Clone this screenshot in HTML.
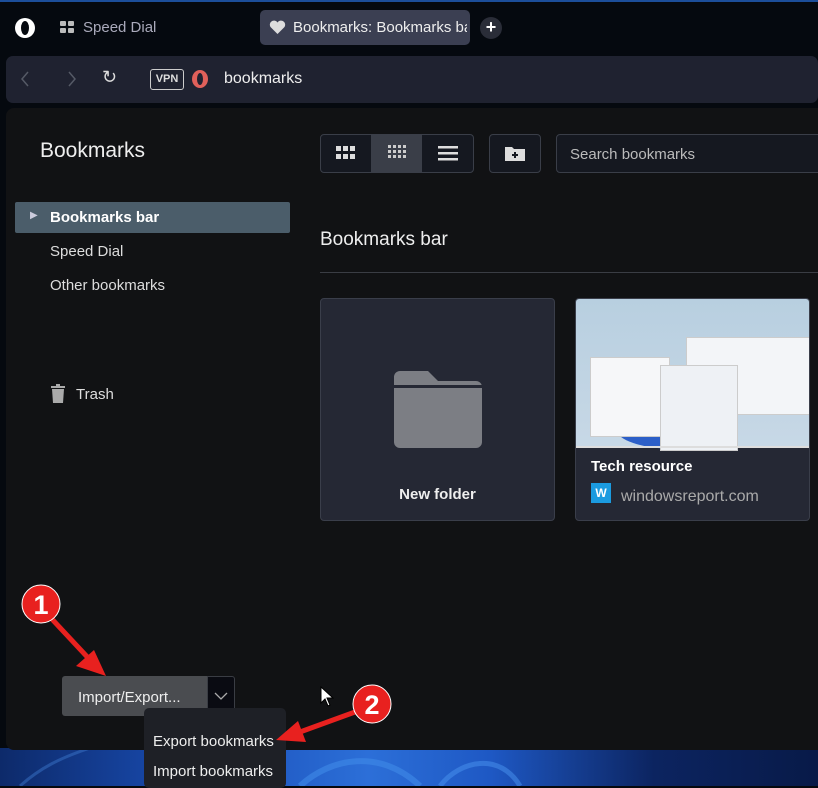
<!DOCTYPE html>
<html><head><meta charset="utf-8"><style>
*{margin:0;padding:0;box-sizing:border-box}
body{width:818px;height:786px;overflow:hidden;background:#05090f;font-family:"Liberation Sans",sans-serif;position:relative;color:#e6e6e6}
.a{position:absolute}
.wall{left:0;top:748px;width:818px;height:38px;background:linear-gradient(90deg,#0d2a6a,#1a4fb8 25%,#2c6fd8 45%,#1e58c4 60%,#0c2460 80%,#081a48)}
.top{left:0;top:0;width:818px;height:110px;background:#05090f;border-top:2px solid #1c4e9a}
.main{left:6px;top:108px;width:812px;height:642px;background:#111214;border-radius:8px 0 0 8px}
.btn{border:1px solid #3a3e48;background:#151820;border-radius:4px}
.card{background:#252834;border:1px solid #3a3e4a;border-radius:4px}
</style></head><body>
<div class="a top"></div>
<div class="a wall"></div>
<svg class="a" style="left:0;top:748px" width="818" height="38"><path d="M300 38C330 10 380 0 420 38" stroke="#3f8ae8" stroke-width="6" fill="none" opacity=".6"/><path d="M440 38C460 12 500 4 520 38" stroke="#4a94ef" stroke-width="5" fill="none" opacity=".5"/><path d="M20 38C40 20 60 10 90 0" stroke="#3a74c8" stroke-width="3" fill="none" opacity=".5"/></svg>
<!-- tab bar -->
<svg class="a" style="left:14px;top:17px" width="22" height="22"><ellipse cx="11" cy="11" rx="10" ry="10" fill="#fff"/><ellipse cx="11" cy="11" rx="4" ry="7" fill="#05090f"/></svg>
<svg class="a" style="left:60px;top:21px" width="14" height="12"><rect x="0" y="0" width="6" height="5" rx="1" fill="#bbb"/><rect x="8" y="0" width="6" height="5" rx="1" fill="#bbb"/><rect x="0" y="7" width="6" height="5" rx="1" fill="#bbb"/><rect x="8" y="7" width="6" height="5" rx="1" fill="#bbb"/></svg>
<div class="a" style="left:83px;top:19px;font-size:15px;color:#aab">Speed Dial</div>
<div class="a" style="left:260px;top:10px;width:210px;height:35px;background:#3b3f52;border-radius:5px"></div>
<svg class="a" style="left:269px;top:20px" width="17" height="15"><path d="M8.5 14L1.5 7A4 4 0 0 1 8.5 2.5A4 4 0 0 1 15.5 7z" fill="#ddd"/></svg>
<div class="a" style="left:293px;top:19px;font-size:15px;color:#eee;width:174px;overflow:hidden;white-space:nowrap">Bookmarks: Bookmarks ba</div>
<div class="a" style="left:480px;top:17px;width:22px;height:22px;border-radius:50%;background:#2a2d38;color:#fff;font-size:18px;line-height:21px;text-align:center;font-weight:bold">+</div>
<!-- address bar -->
<div class="a" style="left:6px;top:56px;width:812px;height:47px;background:#1f2230;border-radius:7px"></div>
<svg class="a" style="left:20px;top:71px" width="10" height="16"><path d="M8 1L2 8l6 7" stroke="#555a66" stroke-width="1.5" fill="none"/></svg>
<svg class="a" style="left:67px;top:71px" width="10" height="16"><path d="M2 1l6 7-6 7" stroke="#555a66" stroke-width="1.5" fill="none"/></svg>
<div class="a" style="left:102px;top:67px;font-size:18px;color:#ddd">↻</div>
<div class="a" style="left:150px;top:69px;width:34px;height:21px;border:1.5px solid #ccc;border-radius:3px;font-size:11px;font-weight:bold;text-align:center;line-height:18px;color:#ddd">VPN</div>
<svg class="a" style="left:191px;top:69px" width="18" height="20"><ellipse cx="9" cy="10" rx="8" ry="9" fill="#e0605a"/><ellipse cx="9" cy="10" rx="3" ry="6" fill="#1f2230"/></svg>
<div class="a" style="left:224px;top:70px;font-size:16px;color:#eee">bookmarks</div>
<!-- main -->
<div class="a main"></div>
<div class="a" style="left:40px;top:139px;font-size:21px;color:#eee">Bookmarks</div>
<div class="a" style="left:15px;top:202px;width:275px;height:31px;background:#4b5d6a;border-radius:2px"></div>
<div class="a" style="left:30px;top:210px;font-size:10px;color:#ccd">▶</div>
<div class="a" style="left:50px;top:209px;font-size:15px;font-weight:bold;color:#fff">Bookmarks bar</div>
<div class="a" style="left:50px;top:243px;font-size:15px;color:#ddd">Speed Dial</div>
<div class="a" style="left:50px;top:277px;font-size:15px;color:#ddd">Other bookmarks</div>
<svg class="a" style="left:51px;top:384px" width="14" height="19"><rect x="0" y="2" width="14" height="2" fill="#aaa"/><rect x="5" y="0" width="4" height="2" fill="#aaa"/><path d="M1 5h12l-1 14H2z" fill="#aaa"/></svg>
<div class="a" style="left:76px;top:386px;font-size:15px;color:#ddd">Trash</div>
<!-- toolbar -->
<div class="a btn" style="left:320px;top:134px;width:154px;height:39px"></div>
<div class="a" style="left:371px;top:135px;width:51px;height:37px;background:#3a3e48"></div>
<svg class="a" style="left:336px;top:146px" width="20" height="15"><g fill="#ddd"><rect x="0" y="0" width="5" height="5"/><rect x="7" y="0" width="5" height="5"/><rect x="14" y="0" width="5" height="5"/><rect x="0" y="8" width="5" height="5"/><rect x="7" y="8" width="5" height="5"/><rect x="14" y="8" width="5" height="5"/></g></svg>
<svg class="a" style="left:388px;top:145px" width="18" height="18"><g fill="#ccc"><rect x="0" y="0" width="3" height="3"/><rect x="5" y="0" width="3" height="3"/><rect x="10" y="0" width="3" height="3"/><rect x="15" y="0" width="3" height="3"/><rect x="0" y="5" width="3" height="3"/><rect x="5" y="5" width="3" height="3"/><rect x="10" y="5" width="3" height="3"/><rect x="15" y="5" width="3" height="3"/><rect x="0" y="10" width="3" height="3"/><rect x="5" y="10" width="3" height="3"/><rect x="10" y="10" width="3" height="3"/><rect x="15" y="10" width="3" height="3"/></g></svg>
<svg class="a" style="left:438px;top:146px" width="20" height="15"><g fill="#ddd"><rect y="0" width="20" height="2.5"/><rect y="6" width="20" height="2.5"/><rect y="12" width="20" height="2.5"/></g></svg>
<div class="a btn" style="left:489px;top:134px;width:52px;height:39px"></div>
<svg class="a" style="left:505px;top:145px" width="20" height="16"><path d="M0 2h7l2 2h11v12H0z" fill="#ddd"/><path d="M10 7v6M7 10h6" stroke="#151820" stroke-width="2"/></svg>
<div class="a btn" style="left:556px;top:134px;width:270px;height:39px"></div>
<div class="a" style="left:570px;top:146px;font-size:15px;color:#bbb">Search bookmarks</div>
<div class="a" style="left:320px;top:229px;font-size:19px;color:#eee">Bookmarks bar</div>
<div class="a" style="left:320px;top:272px;width:498px;height:1px;background:#3a3d44"></div>
<!-- cards -->
<div class="a card" style="left:320px;top:298px;width:235px;height:223px"></div>
<svg class="a" style="left:394px;top:371px" width="88" height="77"><path d="M0 6a6 6 0 0 1 6-6h28l10 10H82a6 6 0 0 1 6 6v55a6 6 0 0 1-6 6H6a6 6 0 0 1-6-6z" fill="#7c7e84"/><rect x="0" y="14" width="88" height="3" fill="#252834"/></svg>
<div class="a" style="left:320px;top:486px;width:235px;text-align:center;font-size:15px;font-weight:bold;color:#eee">New folder</div>
<div class="a card" style="left:575px;top:298px;width:235px;height:223px;overflow:hidden">
 <div class="a" style="left:0;top:0;width:235px;height:147px;background:linear-gradient(180deg,#b8cfe0,#c7d8e6)"></div>
 <div class="a" style="left:40px;top:110px;width:120px;height:40px;border-radius:50%;background:#2c5fc8"></div>
 <div class="a" style="left:110px;top:38px;width:125px;height:78px;background:#f3f5f8;border:1px solid #ccc"></div>
 <div class="a" style="left:14px;top:58px;width:80px;height:80px;background:#f6f7f9;border:1px solid #ccc"></div>
 <div class="a" style="left:84px;top:66px;width:78px;height:86px;background:#eef1f5;border:1px solid #ccc"></div>
 <div class="a" style="left:0;top:147px;width:235px;height:2px;background:#ddd"></div>
</div>
<div class="a" style="left:591px;top:458px;font-size:15px;font-weight:bold;color:#fff">Tech resource</div>
<div class="a" style="left:591px;top:483px;width:20px;height:20px;background:#1b9be0;color:#fff;font-size:12px;font-weight:bold;text-align:center;line-height:20px">W</div>
<div class="a" style="left:621px;top:488px;font-size:16px;color:#aaa">windowsreport.com</div>
<!-- import/export -->
<div class="a" style="left:62px;top:676px;width:145px;height:40px;background:#4a4c50;border-radius:3px 0 0 3px"></div>
<div class="a" style="left:78px;top:689px;font-size:15px;color:#eee">Import/Export...</div>
<div class="a" style="left:207px;top:676px;width:28px;height:40px;background:#0a0b12;border:1px solid #3a3d44;border-radius:0 3px 3px 0"></div>
<svg class="a" style="left:214px;top:692px" width="14" height="8"><path d="M1 1l6 6 6-6" stroke="#aaa" fill="none" stroke-width="1.3"/></svg>
<div class="a" style="left:144px;top:708px;width:142px;height:80px;background:#1e2026;border-radius:5px"></div>
<div class="a" style="left:153px;top:733px;font-size:15px;color:#eee">Export bookmarks</div>
<div class="a" style="left:153px;top:763px;font-size:15px;color:#eee">Import bookmarks</div>
<svg class="a" style="left:320px;top:686px" width="14" height="22"><path d="M1 1v16l4-4 3 7 2-1-3-7h6z" fill="#fff" stroke="#000" stroke-width="1"/></svg>
<!-- annotations -->
<svg class="a" style="left:0;top:0" width="818" height="786">
<line x1="50" y1="617" x2="92" y2="662" stroke="#e8211f" stroke-width="5"/>
<path d="M106 676l-30-10 18-16z" fill="#e8211f"/>
<line x1="355" y1="712" x2="300" y2="732" stroke="#e8211f" stroke-width="5"/>
<path d="M276 740l22-19 8 21z" fill="#e8211f"/>
<circle cx="41" cy="604" r="19" fill="#e8211f" stroke="#fff" stroke-width="1"/>
<text x="41" y="614" font-family="Liberation Sans" font-weight="bold" font-size="27" fill="#fff" text-anchor="middle">1</text>
<circle cx="372" cy="704" r="19" fill="#e8211f" stroke="#fff" stroke-width="1"/>
<text x="372" y="714" font-family="Liberation Sans" font-weight="bold" font-size="27" fill="#fff" text-anchor="middle">2</text>
</svg>
</body></html>
